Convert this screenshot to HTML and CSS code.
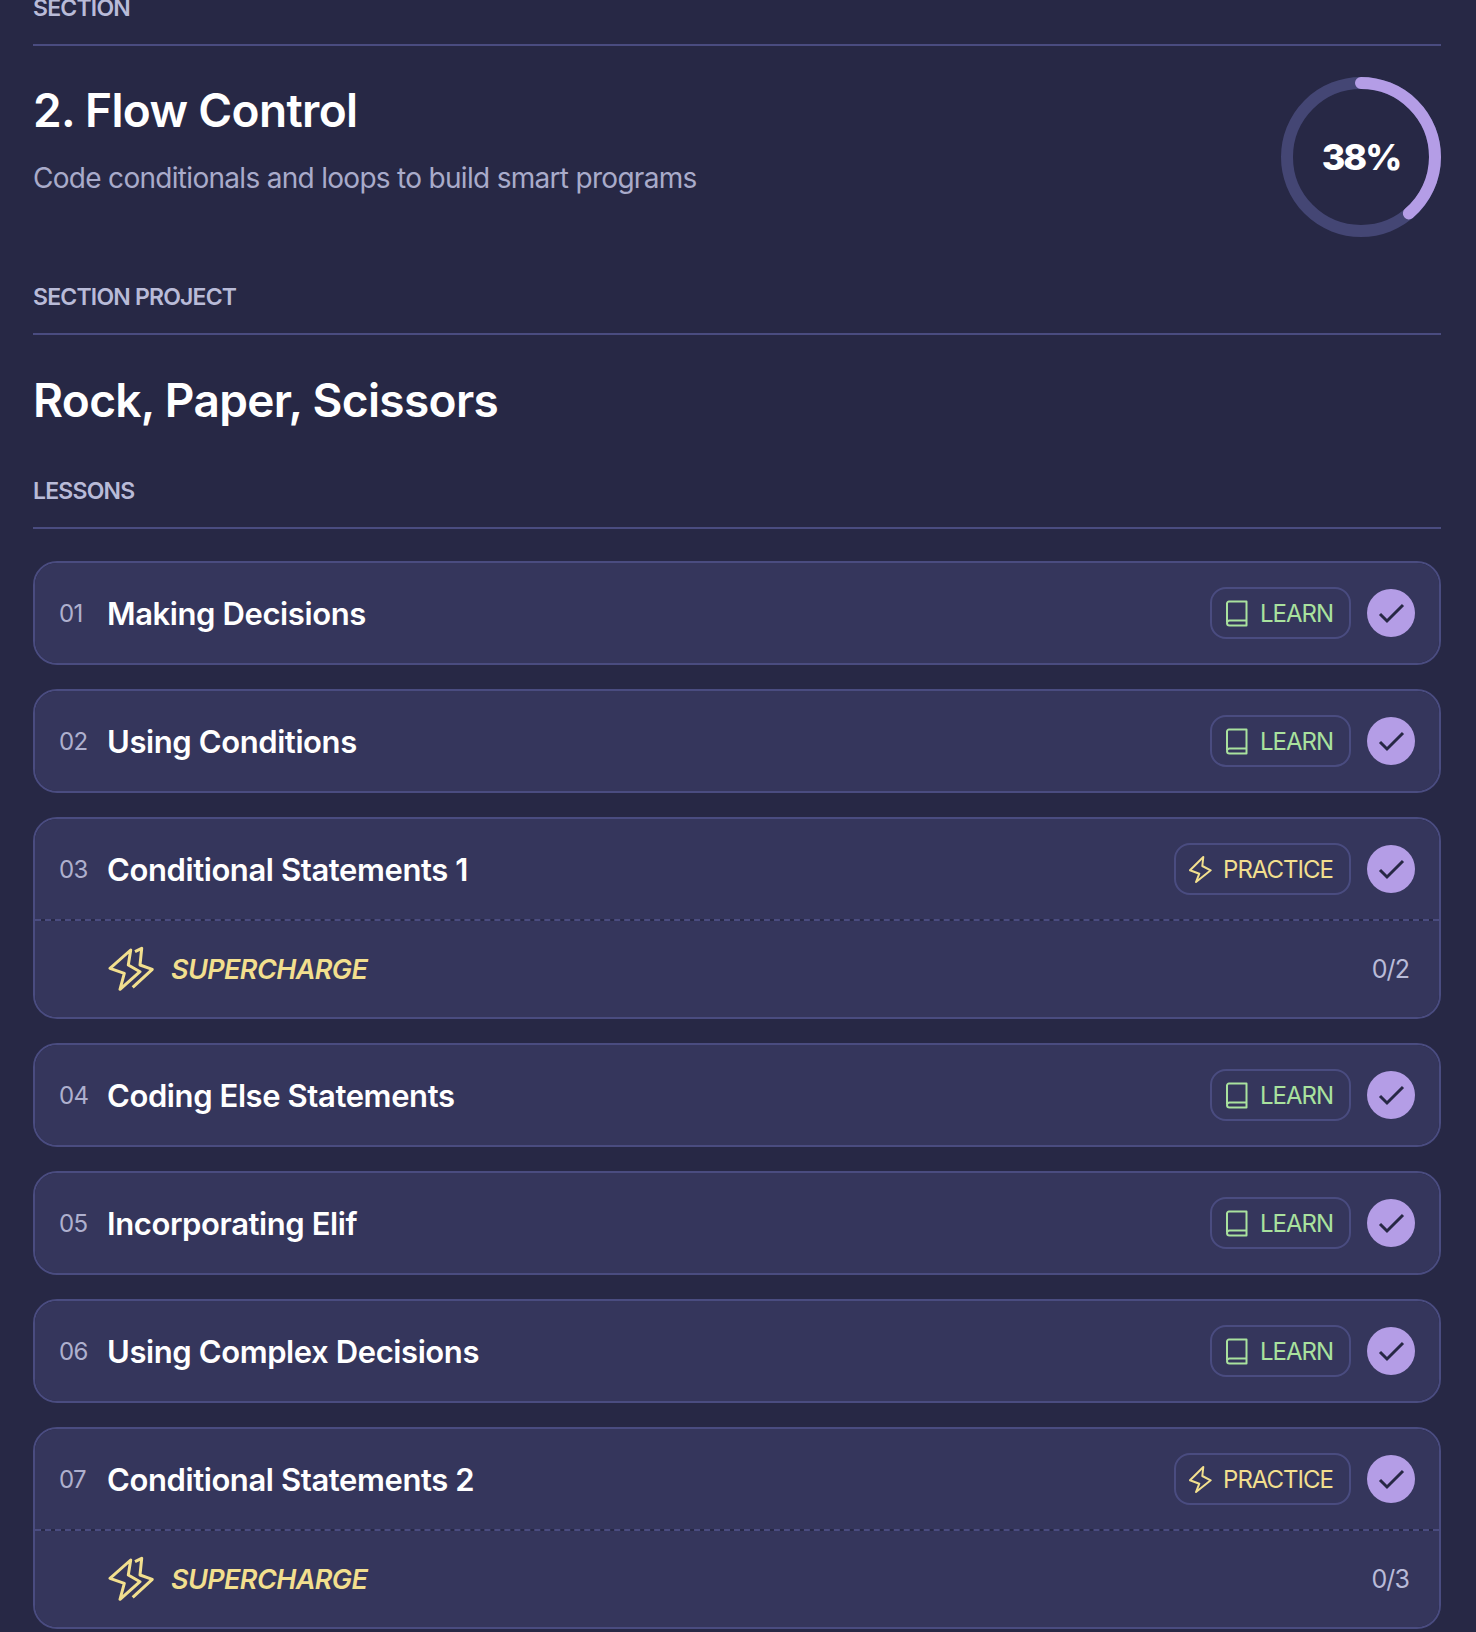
FILE: index.html
```html
<!DOCTYPE html>
<html lang="en">
<head>
<meta charset="utf-8">
<title>Flow Control</title>
<link rel="stylesheet" href="styles.css">
</head>
<body>
<svg class="sprite" width="0" height="0" aria-hidden="true">
  <symbol id="book" viewBox="0 0 24 28"><path d="M3 23V4.500A2 2 0 0 1 5 2.500h17.500v24H5.500A2.500 2.500 0 0 1 3 24a2.500 2.500 0 0 1 2.500-2.500h17" fill="none" stroke="currentColor" stroke-width="2" stroke-linejoin="round"/></symbol>
  <symbol id="bolt" viewBox="0 0 24 28"><path d="M15.300 2 2 15.300l9.300 3.400L8 27l14.700-11.700-8.400-4.300z" fill="none" stroke="currentColor" stroke-width="2" stroke-linejoin="round"/></symbol>
  <symbol id="bolts" viewBox="0 0 48 48"><path d="M22.700 5 2 23.300l14.300 5L12 44.300l20-17.600-11.700-6.700z" fill="none" stroke="currentColor" stroke-width="3" stroke-linejoin="round"/><path d="M27 6.700l6.700-3.400L32 20l12.300 4.300-19.600 18" fill="none" stroke="currentColor" stroke-width="3" stroke-linejoin="round"/></symbol>
  <symbol id="check" viewBox="0 0 48 48"><path d="M13 25l7 7 16-16" fill="none" stroke="currentColor" stroke-width="3"/></symbol>
</svg>
<main class="page">
  <header class="block">
    <div class="label">SECTION</div>
    <div class="head">
      <div>
        <h1 class="title">2. Flow Control</h1>
        <p class="sub">Code conditionals and loops to build smart programs</p>
      </div>
      <div class="ring">
        <svg class="ring-svg" width="160" height="160" viewBox="0 0 160 160">
          <circle class="ring-track" cx="80" cy="80" r="74"/>
          <circle class="ring-fill" cx="80" cy="80" r="74" pathLength="100" stroke-dasharray="38.800 100" transform="rotate(-90 80 80)"/>
        </svg>
        <span class="ring-text">38%</span>
      </div>
    </div>
  </header>
  <section class="block project">
    <div class="label">SECTION PROJECT</div>
    <h2 class="project-title">Rock, Paper, Scissors</h2>
  </section>
  <section class="block">
    <div class="label">LESSONS</div>
    <div class="lessons">
      <article class="card">
        <div class="row"><span class="num">01</span><span class="name">Making Decisions</span>
          <span class="badge learn"><svg class="bi"><use href="#book"/></svg>LEARN</span>
          <span class="done"><svg class="ci"><use href="#check"/></svg></span></div>
      </article>
      <article class="card">
        <div class="row"><span class="num">02</span><span class="name">Using Conditions</span>
          <span class="badge learn"><svg class="bi"><use href="#book"/></svg>LEARN</span>
          <span class="done"><svg class="ci"><use href="#check"/></svg></span></div>
      </article>
      <article class="card">
        <div class="row"><span class="num">03</span><span class="name">Conditional Statements 1</span>
          <span class="badge practice"><svg class="bi"><use href="#bolt"/></svg>PRACTICE</span>
          <span class="done"><svg class="ci"><use href="#check"/></svg></span></div>
        <div class="extra"><svg class="si"><use href="#bolts"/></svg><span class="super">SUPERCHARGE</span><span class="count">0/2</span></div>
      </article>
      <article class="card">
        <div class="row"><span class="num">04</span><span class="name">Coding Else Statements</span>
          <span class="badge learn"><svg class="bi"><use href="#book"/></svg>LEARN</span>
          <span class="done"><svg class="ci"><use href="#check"/></svg></span></div>
      </article>
      <article class="card">
        <div class="row"><span class="num">05</span><span class="name">Incorporating Elif</span>
          <span class="badge learn"><svg class="bi"><use href="#book"/></svg>LEARN</span>
          <span class="done"><svg class="ci"><use href="#check"/></svg></span></div>
      </article>
      <article class="card">
        <div class="row"><span class="num">06</span><span class="name">Using Complex Decisions</span>
          <span class="badge learn"><svg class="bi"><use href="#book"/></svg>LEARN</span>
          <span class="done"><svg class="ci"><use href="#check"/></svg></span></div>
      </article>
      <article class="card">
        <div class="row"><span class="num">07</span><span class="name">Conditional Statements 2</span>
          <span class="badge practice"><svg class="bi"><use href="#bolt"/></svg>PRACTICE</span>
          <span class="done"><svg class="ci"><use href="#check"/></svg></span></div>
        <div class="extra"><svg class="si"><use href="#bolts"/></svg><span class="super">SUPERCHARGE</span><span class="count">0/3</span></div>
      </article>
    </div>
  </section>
</main>
</body>
</html>
```
FILE: styles.css
```css
* { box-sizing: border-box; }
html, body { margin: 0; height: 100%; }
body {
  background: #272845;
  color: #fff;
  font-family: Inter, "Liberation Sans", sans-serif;
  overflow: hidden;
}
.sprite { position: absolute; }
.page { margin-top: -8px; padding: 0 35px 0 33px; }
.label {
  font-size: 23px;
  font-weight: 600;
  line-height: 32px;
  letter-spacing: -0.8px;
  color: #b9bbd8;
  padding-bottom: 20px;
  border-bottom: 2px solid #4a4c80;
}
.head {
  display: flex;
  justify-content: space-between;
  padding-top: 31px;
}
.title {
  margin: 0;
  font-size: 46px;
  font-weight: 600;
  line-height: 66px;
  letter-spacing: -0.65px;
}
.sub {
  margin: 15px 0 0;
  font-size: 28px;
  line-height: 40px;
  letter-spacing: -0.7px;
  color: #a9abca;
}
.ring { display: grid; place-items: center; width: 160px; height: 160px; }
.ring-svg, .ring-text { grid-area: 1 / 1; }
.ring-track { fill: none; stroke: #444674; stroke-width: 12; }
.ring-fill { fill: none; stroke: #b49de6; stroke-width: 12; stroke-linecap: round; }
.ring-text { font-size: 36px; font-weight: 800; letter-spacing: -2px; }
.block + .block { padding-top: 44px; }
.project-title {
  margin: 0;
  padding: 35px 0 1px;
  font-size: 46px;
  font-weight: 600;
  line-height: 60px;
  letter-spacing: -0.65px;
}
.lessons { display: flex; flex-direction: column; gap: 24px; padding-top: 32px; }
.card {
  border: 2px solid #4a4c80;
  border-radius: 24px;
  overflow: hidden;
}
.row {
  display: flex;
  align-items: center;
  height: 100px;
  padding: 0 24px;
  background: #35365c;
}
.num {
  width: 48px;
  font-size: 24px;
  letter-spacing: -0.6px;
  color: #aeb0ce;
}
.name {
  flex: 1;
  font-size: 31px;
  font-weight: 600;
  letter-spacing: -0.4px;
}
.badge {
  display: flex;
  align-items: center;
  gap: 12px;
  height: 52px;
  padding: 0 16px 0 12px;
  border: 2px solid #4a4c80;
  border-radius: 16px;
  font-size: 24px;
  letter-spacing: -1px;
}
.learn { color: #a9e29e; }
.practice { color: #f2df8e; gap: 11px; }
.bi { width: 24px; height: 28px; }
.done {
  display: grid;
  place-items: center;
  width: 48px;
  height: 48px;
  margin-left: 16px;
  border-radius: 50%;
  background: #b49de6;
  color: #272845;
}
.ci { width: 48px; height: 48px; }
.extra {
  display: flex;
  align-items: center;
  height: 98px;
  padding: 0 30px 0 73px;
  border-top: 2px dashed #4a4c80;
  background: #35365c;
  background-clip: padding-box;
}
.si { width: 48px; height: 48px; color: #f2df8e; }
.super {
  flex: 1;
  margin-left: 15px;
  font-size: 27px;
  font-weight: 600;
  font-style: italic;
  letter-spacing: -0.6px;
  color: #f2df8e;
}
.count { font-size: 25px; letter-spacing: -0.9px; color: #b9bbd8; }
```
